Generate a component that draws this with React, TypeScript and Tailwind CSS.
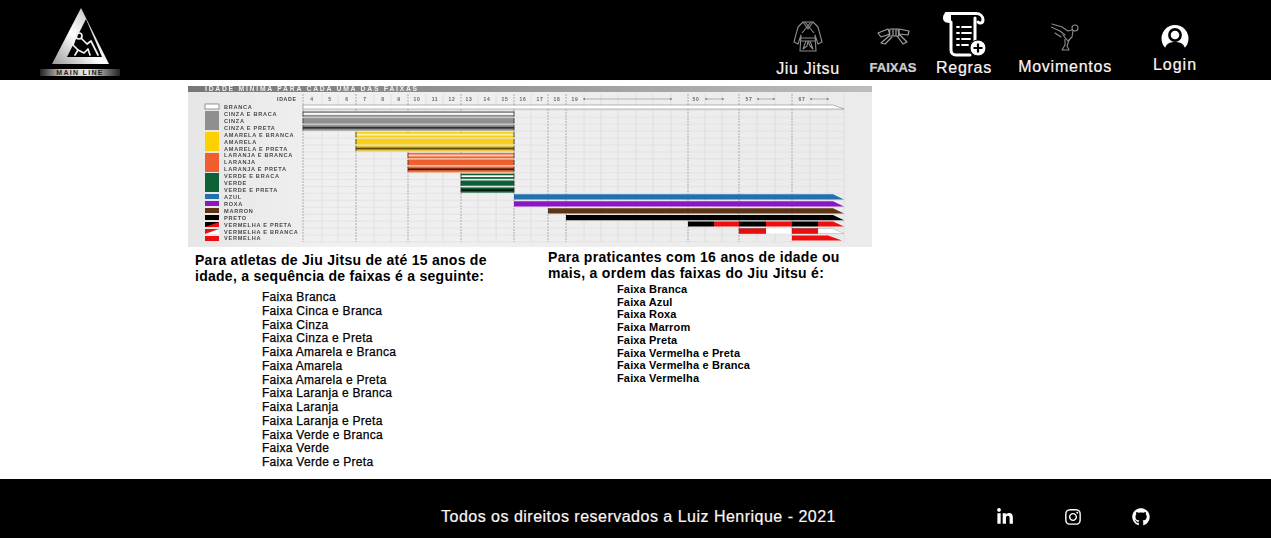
import { FaGithub, FaInstagram, FaLinkedinIn } from 'react-icons/fa';

const font = "font-['Liberation_Sans',Arial,sans-serif]";

const youngBelts = [
  'Faixa Branca',
  'Faixa Cinca e Branca',
  'Faixa Cinza',
  'Faixa Cinza e Preta',
  'Faixa Amarela e Branca',
  'Faixa Amarela',
  'Faixa Amarela e Preta',
  'Faixa Laranja e Branca',
  'Faixa Laranja',
  'Faixa Laranja e Preta',
  'Faixa Verde e Branca',
  'Faixa Verde',
  'Faixa Verde e Preta',
];

const adultBelts = [
  'Faixa Branca',
  'Faixa Azul',
  'Faixa Roxa',
  'Faixa Marrom',
  'Faixa Preta',
  'Faixa Vermelha e Preta',
  'Faixa Vermelha e Branca',
  'Faixa Vermelha',
];

// chart geometry, in px from the chart's top-left corner
const columns = [115, 134, 150, 168, 186, 203, 220, 238, 255, 273, 290, 308, 326, 343, 360, 378, 396, 413, 430, 448, 465, 483, 500, 517, 534, 551, 569, 587, 604, 622, 639, 656];
const strongColumns = [115, 168, 220, 273, 326, 360, 378, 500, 551, 604];
const ages = [
  ['4', 124],
  ['5', 142],
  ['6', 159],
  ['7', 177],
  ['8', 195],
  ['9', 211],
  ['10', 229],
  ['11', 247],
  ['12', 264],
  ['13', 281],
  ['14', 299],
  ['15', 317],
  ['16', 335],
  ['17', 352],
  ['18', 369],
  ['19', 387],
  ['50', 508],
  ['57', 561],
  ['67', 614],
] as const;
const arrows = [
  [395, 484],
  [517, 536],
  [569, 587],
  [622, 641],
];

const rowLabels = [
  'BRANCA',
  'CINZA E BRACA',
  'CINZA',
  'CINZA E PRETA',
  'AMARELA E BRANCA',
  'AMARELA',
  'AMARELA E PRETA',
  'LARANJA E BRANCA',
  'LARANJA',
  'LARANJA E PRETA',
  'VERDE E BRACA',
  'VERDE',
  'VERDE E PRETA',
  'AZUL',
  'ROXA',
  'MARRON',
  'PRETO',
  'VERMELHA E PRETA',
  'VERMELHA E BRANCA',
  'VERMELHA',
];
const rowY = (i: number) => 21 + i * 6.92;

const kidBars = [
  { row: 1, x: 115, color: '#8f8f8f', stripe: '#ffffff' },
  { row: 2, x: 115, color: '#8f8f8f' },
  { row: 3, x: 115, color: '#8f8f8f', stripe: '#333333' },
  { row: 4, x: 168, color: '#f5cf1c', stripe: '#fff3a8' },
  { row: 5, x: 168, color: '#f5cf1c' },
  { row: 6, x: 168, color: '#e3c54a', stripe: '#5e4700' },
  { row: 7, x: 220, color: '#ee6a3a', stripe: '#ffd0b8' },
  { row: 8, x: 220, color: '#ec5f2e' },
  { row: 9, x: 220, color: '#e8693b', stripe: '#4a1606' },
  { row: 10, x: 273, color: '#0e5e35', stripe: '#ffffff' },
  { row: 11, x: 273, color: '#0e5e35' },
  { row: 12, x: 273, color: '#0e5e35', stripe: '#06200f' },
];

// pale band that shows between the bars of one colour family
const kidBands = [
  { x: 115, y: 25, h: 20, color: '#c4c4c4' },
  { x: 168, y: 46, h: 20, color: '#eedf92' },
  { x: 220, y: 67, h: 20, color: '#f2b89c' },
];

const longBars = [
  { row: 13, x: 326, color: '#2170b0' },
  { row: 14, x: 326, color: '#8a13c4' },
  { row: 15, x: 360, color: '#5b3512' },
  { row: 16, x: 378, color: '#000000' },
];

const swatches = [
  { y: 18, h: 5, color: '#ffffff' },
  { y: 25, h: 19, color: '#8f8f8f' },
  { y: 46, h: 19, color: '#fdd000' },
  { y: 67, h: 19, color: '#f15d2f' },
  { y: 87, h: 19, color: '#0c6238' },
  { y: 108, h: 5, color: '#2170b0' },
  { y: 115, h: 5, color: '#8a13c4' },
  { y: 122, h: 5, color: '#5b3512' },
  { y: 129, h: 5, color: '#000000' },
  { y: 150, h: 5, color: '#f00d0d' },
];

function BeltChart() {
  return (
    <svg width="684" height="161" viewBox="0 0 684 161" className="block">
      <defs>
        <linearGradient id="titleBar" x1="0" x2="1" y1="0" y2="0">
          <stop offset="0" stopColor="#777777" />
          <stop offset="0.5" stopColor="#9a9a9a" />
          <stop offset="1" stopColor="#bdbdbd" />
        </linearGradient>
        <linearGradient id="paper" x1="0" x2="1" y1="0" y2="0">
          <stop offset="0" stopColor="#e6e6e6" />
          <stop offset="0.2" stopColor="#f0f0f0" />
          <stop offset="1" stopColor="#ebebeb" />
        </linearGradient>
        <filter id="soft" x="0" y="0" width="100%" height="100%">
          <feGaussianBlur stdDeviation="0.35" />
        </filter>
      </defs>

      <g filter="url(#soft)">
        <rect width="684" height="161" fill="url(#paper)" />
        <rect width="684" height="6" fill="url(#titleBar)" />
        <text x="17" y="5.3" fontFamily="Liberation Sans" fontWeight="700" fontSize="6.8" letterSpacing="1.75" fill="#eeeeee">
          IDADE MÍNIMA PARA CADA UMA DAS FAIXAS
        </text>

        {rowLabels.map((_, i) => (
          <line key={i} x1="115" x2="656" y1={rowY(i) + 3.4} y2={rowY(i) + 3.4} stroke="#e0e0e0" strokeWidth="0.7" />
        ))}
        {columns.map((x) => (
          <line
            key={x}
            x1={x}
            x2={x}
            y1="8"
            y2="156"
            stroke={strongColumns.includes(x) ? '#a0a0a0' : '#dadada'}
            strokeWidth="0.8"
            strokeDasharray={strongColumns.includes(x) ? '2 1' : undefined}
          />
        ))}

        <text x="89" y="15" fontFamily="Liberation Sans" fontWeight="700" fontSize="5.2" letterSpacing="0.7" fill="#444444">
          IDADE
        </text>
        {ages.map(([age, x]) => (
          <text key={age} x={x} y="15" textAnchor="middle" fontFamily="Liberation Sans" fontWeight="700" fontSize="5" letterSpacing="0.6" fill="#666666">
            {age}
          </text>
        ))}
        {arrows.map(([a, b]) => (
          <g key={a} fill="#666666">
            <line x1={a} x2={b} y1="13" y2="13" stroke="#888888" strokeWidth="0.6" />
            <polygon points={`${a},13 ${a + 2},12 ${a + 2},14`} />
            <polygon points={`${b},13 ${b - 2},12 ${b - 2},14`} />
          </g>
        ))}

        {swatches.map((s) => (
          <rect key={s.y} x="17" y={s.y} width="14" height={s.h} fill={s.color} stroke={s.color === '#ffffff' ? '#555555' : 'none'} strokeWidth="0.6" />
        ))}
        <rect x="17" y="136" width="14" height="5" fill="#f00d0d" />
        <polygon points="17,141 31,136 17,136" fill="#000000" />
        <rect x="17" y="143" width="14" height="5" fill="#ffffff" />
        <polygon points="17,148 31,143 17,143" fill="#f00d0d" />

        {rowLabels.map((label, i) => (
          <text key={label} x="36" y={rowY(i) + 2} fontFamily="Liberation Sans" fontWeight="700" fontSize="5.6" letterSpacing="0.72" fill="#4a4a4a">
            {label}
          </text>
        ))}

        {/* white belt runs the whole width */}
        <polygon points="115,19 645,19 656,23 645,23 115,23" fill="#ffffff" stroke="#888888" strokeWidth="0.6" />

        {kidBands.map((b) => (
          <rect key={b.y} x={b.x} y={b.y} width={326 - b.x} height={b.h} fill={b.color} />
        ))}
        {kidBars.map((b) => (
          <g key={b.row}>
            <rect x={b.x} y={rowY(b.row) - 2.6} width={326 - b.x} height="5.2" fill={b.color} />
            {b.stripe && <rect x={b.x} y={rowY(b.row) - 0.9} width={326 - b.x} height="1.8" fill={b.stripe} />}
            <line x1={b.x} x2={b.x} y1={rowY(b.row) - 2.6} y2={rowY(b.row) + 2.6} stroke="#333333" strokeWidth="0.8" />
            <line x1="326" x2="326" y1={rowY(b.row) - 2.6} y2={rowY(b.row) + 2.6} stroke="#333333" strokeWidth="0.8" />
          </g>
        ))}

        {longBars.map((b) => (
          <polygon
            key={b.row}
            points={`${b.x},${rowY(b.row) - 2.6} 645,${rowY(b.row) - 2.6} 656,${rowY(b.row) + 2.6} ${b.x},${rowY(b.row) + 2.6}`}
            fill={b.color}
          />
        ))}

        {/* red belts, in alternating segments */}
        <g>
          <rect x="500" y="135.5" width="26" height="5" fill="#000000" />
          <rect x="526" y="135.5" width="25" height="5" fill="#f00d0d" />
          <rect x="551" y="135.5" width="27" height="5" fill="#000000" />
          <rect x="578" y="135.5" width="26" height="5" fill="#f00d0d" />
          <rect x="604" y="135.5" width="26" height="5" fill="#000000" />
          <polygon points="630,135.5 645,135.5 656,140.5 630,140.5" fill="#f00d0d" />

          <rect x="551" y="142.5" width="27" height="5" fill="#ea1010" stroke="#7a1a1a" strokeWidth="0.5" />
          <rect x="578" y="142.5" width="26" height="5" fill="#ffffff" />
          <rect x="604" y="142.5" width="26" height="5" fill="#ea1010" stroke="#7a1a1a" strokeWidth="0.5" />
          <polygon points="630,142.5 645,142.5 656,147.5 630,147.5" fill="#ffffff" stroke="#999999" strokeWidth="0.4" />

          <polygon points="604,149.5 640,149.5 654,154.5 604,154.5" fill="#f00d0d" />
        </g>
      </g>
    </svg>
  );
}

function Logo() {
  return (
    <svg width="82" height="72" viewBox="0 0 82 72" className="block">
      <defs>
        <linearGradient id="logoFrame" x1="0" x2="1" y1="1" y2="0">
          <stop offset="0" stopColor="#9a9a9a" />
          <stop offset="0.45" stopColor="#ffffff" />
          <stop offset="1" stopColor="#a5a5a5" />
        </linearGradient>
        <linearGradient id="logoBar" x1="0" x2="1" y1="0" y2="0">
          <stop offset="0" stopColor="#222222" />
          <stop offset="0.25" stopColor="#bdbdbd" />
          <stop offset="0.6" stopColor="#e8e8e8" />
          <stop offset="1" stopColor="#222222" />
        </linearGradient>
      </defs>
      <polygon points="41,0 12,56 69,56" fill="url(#logoFrame)" />
      <polygon points="46,11 27,49 62,49" fill="#000000" />
      <g fill="none" stroke="#f2f2f2" strokeWidth="1.7" strokeLinecap="round" strokeLinejoin="round">
        <circle cx="39" cy="28" r="3" />
        <path d="M35 30 L33 37 L38 42 L35 47" />
        <path d="M42 31 L47 36 L51 33 L58 47" />
        <path d="M38 42 L44 45 L48 41 L50 47" />
      </g>
      <rect x="0" y="61" width="80" height="7" fill="url(#logoBar)" />
      <text x="40" y="67" textAnchor="middle" fontFamily="Liberation Sans" fontWeight="700" fontSize="7" letterSpacing="1.3" fill="#222222">
        MAIN LINE
      </text>
    </svg>
  );
}

function KimonoIcon() {
  return (
    <svg width="30" height="32" viewBox="0 0 30 32" fill="none" stroke="#8c8c8c" strokeWidth="1.1" strokeLinejoin="round" className="block">
      <path d="M10 2 L20 2 L25 7 L29 22 L25 24 L22 15 L23 31 L7 31 L8 15 L5 24 L1 22 L5 7 Z" />
      <path d="M10 2 L15 9 L20 2 M12 2 L21 13 M18 2 L9 13" />
      <path d="M8 18 L22 18 M8 21 L22 21" />
      <path d="M13 21 L10 29 L14 26 L15 21 L17 26 L20 29 L17 21" />
    </svg>
  );
}

function BeltIcon() {
  return (
    <svg width="33" height="17" viewBox="0 0 33 17" fill="none" stroke="#a0a0a0" strokeWidth="1.2" strokeLinejoin="round" className="block">
      <path d="M1 5 L11 1 L13 6 L4 9 Z" />
      <path d="M22 1 L32 3 L31 7 L22 6 Z" />
      <path d="M13 1 L21 1 L22 8 L12 8 Z" />
      <path d="M16 1 L16 8 M19 1 L19 8" />
      <path d="M12 8 L4 15 L8 16 L15 9" />
      <path d="M20 8 L26 16 L30 14 L22 6" />
    </svg>
  );
}

function ScrollIcon() {
  return (
    <svg width="44" height="45" viewBox="0 0 44 45" className="block">
      <path d="M4 1.5 L9 1.5 L9 11 C4 11 1 10 1 6 C1 3 2 1.5 4 1.5 Z" fill="#ffffff" />
      <g fill="none" stroke="#ffffff" strokeWidth="3" strokeLinejoin="round" strokeLinecap="round">
        <path d="M4 1.5 L34 1.5 C38 1.5 41 4 41 8 C41 11 38 12 36 10" />
        <path d="M9 10 L9 38 C9 41 11 43 14 43 L28 43" />
        <path d="M33 6 L33 30" />
      </g>
      <g stroke="#ffffff" strokeWidth="1.8" strokeLinecap="round">
        <path d="M15 15 L17 15 M20 15 L29 15" />
        <path d="M15 21 L17 21 M20 21 L29 21" />
        <path d="M15 27 L17 27 M20 27 L28 27" />
        <path d="M15 33 L17 33 M20 33 L26 33" />
      </g>
      <circle cx="36" cy="36" r="8" fill="#ffffff" stroke="#000000" strokeWidth="1" />
      <path d="M36 31.5 L36 40.5 M31.5 36 L40.5 36" stroke="#000000" strokeWidth="2.2" />
    </svg>
  );
}

function KickIcon() {
  return (
    <svg width="29" height="29" viewBox="0 0 29 29" fill="none" stroke="#8c8c8c" strokeWidth="1.1" strokeLinejoin="round" strokeLinecap="round" className="block">
      <circle cx="24" cy="6" r="3" />
      <path d="M1 2 L11 5 L17 9 L21 8" />
      <path d="M0 5 L9 9 L14 13" />
      <path d="M4 11 L10 15" />
      <path d="M22 9 L21 15 L17 19 L12 13" />
      <path d="M14 17 L14 23 L11 28 L18 28 L16 24 L18 18" />
    </svg>
  );
}

function UserIcon() {
  return (
    <svg width="28" height="23" viewBox="0 0 28 23" className="block">
      <circle cx="14" cy="13.5" r="13.5" fill="#ffffff" />
      <circle cx="14" cy="10" r="5.6" fill="#ffffff" stroke="#000000" strokeWidth="2.6" />
      <path d="M4 23 C6 17.5 10 17 14 17 C18 17 22 17.5 24 23 Z" fill="#000000" />
    </svg>
  );
}

function Header() {
  return (
    <header className="flex h-20 items-start bg-black text-base leading-[18px] text-[#fdf5f5] [-webkit-text-stroke:0.2px_#fdf5f5]">
      <div className="ml-10 pt-2">
        <Logo />
      </div>
      <nav className="ml-auto flex pr-[61px]">
        <a className="flex w-20 flex-col items-center pt-5">
          <KimonoIcon />
          <span className="mt-2 tracking-[0.65px]">Jiu Jitsu</span>
        </a>
        <a className="flex w-[90px] flex-col items-center pt-7">
          <BeltIcon />
          <span className="mt-[15px] text-[13px] leading-[15px] font-bold text-[#c9c9c9]">FAIXAS</span>
        </a>
        <a className="flex w-[52px] flex-col items-center pt-3">
          <ScrollIcon />
          <span className="mt-[2px] tracking-[0.7px]">Regras</span>
        </a>
        <a className="flex w-[150px] flex-col items-center pt-[22px]">
          <KickIcon />
          <span className="mt-[7px] tracking-[0.75px]">Movimentos</span>
        </a>
        <a className="flex w-[70px] flex-col items-center pt-[25px]">
          <UserIcon />
          <span className="mt-2 tracking-[1px]">Login</span>
        </a>
      </nav>
    </header>
  );
}

function Footer() {
  return (
    <footer className="flex h-[59px] items-center bg-black pt-4 text-[#fdf5f5]">
      <p className="ml-[441px] w-[395px] text-base leading-[18px] tracking-[0.49px] whitespace-nowrap [-webkit-text-stroke:0.2px_#fdf5f5]">
        Todos os direitos reservados a Luiz Henrique - 2021
      </p>
      <div className="ml-40 flex items-center gap-[50px] text-white">
        <FaLinkedinIn className="h-[18px] w-[18px]" />
        <FaInstagram className="h-[18px] w-[18px]" />
        <FaGithub className="h-[18px] w-[18px]" />
      </div>
    </footer>
  );
}

export default function App() {
  return (
    <div className={`min-h-[538px] bg-white ${font}`}>
      <Header />
      <main className="h-[399px] pt-[6px] pl-[188px] text-black">
        <BeltChart />
        <div className="flex">
          <section className="w-[360px] pt-[5px] pl-[7px]">
            <h2 className="text-sm leading-4 font-bold tracking-[0.27px]">
              Para atletas de Jiu Jitsu de até 15 anos de
              <br />
              idade, a sequência de faixas é a seguinte:
            </h2>
            <ul className="mt-[7px] pl-[67px] text-xs leading-[13.75px] tracking-[0.28px] [-webkit-text-stroke:0.25px_black]">
              {youngBelts.map((belt) => (
                <li key={belt}>{belt}</li>
              ))}
            </ul>
          </section>
          <section className="w-[324px] pt-[2px]">
            <h2 className="text-sm leading-4 font-bold tracking-[0.31px]">
              Para praticantes com 16 anos de idade ou
              <br />
              mais, a ordem das faixas do Jiu Jitsu é:
            </h2>
            <ul className="mt-[2px] pl-[69px] text-[11px] leading-[12.7px] font-bold tracking-[0.15px]">
              {adultBelts.map((belt) => (
                <li key={belt}>{belt}</li>
              ))}
            </ul>
          </section>
        </div>
      </main>
      <Footer />
    </div>
  );
}
